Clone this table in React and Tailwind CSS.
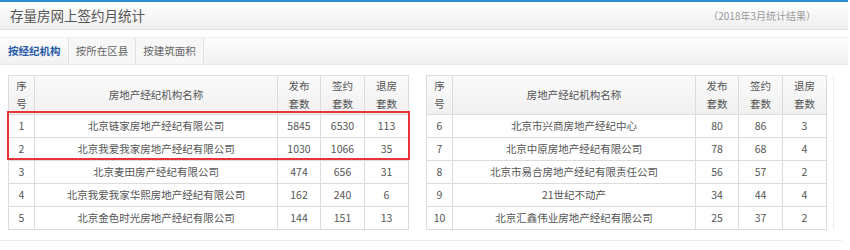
import React from "react";

const left = [
  ["1", "北京链家房地产经纪有限公司", "5845", "6530", "113"],
  ["2", "北京我爱我家房地产经纪有限公司", "1030", "1066", "35"],
  ["3", "北京麦田房产经纪有限公司", "474", "656", "31"],
  ["4", "北京我爱我家华熙房地产经纪有限公司", "162", "240", "6"],
  ["5", "北京金色时光房地产经纪有限公司", "144", "151", "13"],
];

const right = [
  ["6", "北京市兴商房地产经纪中心", "80", "86", "3"],
  ["7", "北京中原房地产经纪有限公司", "78", "68", "4"],
  ["8", "北京市易合房地产经纪有限责任公司", "56", "57", "2"],
  ["9", "21世纪不动产", "34", "44", "4"],
  ["10", "北京汇鑫伟业房地产经纪有限公司", "25", "37", "2"],
];

const cell = "border border-[#dcdcdc] text-center";

const StatTable = ({ rows }) => (
  <table className="w-[400px] border-collapse table-fixed text-[10.5px] text-[#555]">
    <colgroup>
      <col className="w-[26px]" />
      <col className="w-[243px]" />
      <col className="w-[43px]" />
      <col className="w-[44px]" />
      <col className="w-[44px]" />
    </colgroup>
    <thead>
      <tr className="h-[39px] bg-gradient-to-b from-[#fbfbfb] to-[#f0f0f0] leading-[18px] text-[#555]">
        <th className={`${cell} font-normal`}>序<br />号</th>
        <th className={`${cell} font-normal`}>房地产经纪机构名称</th>
        <th className={`${cell} font-normal`}>发布<br />套数</th>
        <th className={`${cell} font-normal`}>签约<br />套数</th>
        <th className={`${cell} font-normal`}>退房<br />套数</th>
      </tr>
    </thead>
    <tbody>
      {rows.map((r) => (
        <tr key={r[0]} className="h-[23px]">
          {r.map((v, i) => (
            <td key={i} className={cell}>{v}</td>
          ))}
        </tr>
      ))}
    </tbody>
  </table>
);

export default function App() {
  return (
    <div
      className="w-[848px] h-[250px] bg-white"
      style={{ fontFamily: '"Noto Sans CJK SC", "Noto Sans", sans-serif' }}
    >
      <div className="h-[2px] bg-[#2a8fd0]" />
      <div className="h-[28px] flex items-center justify-between px-[10px] bg-gradient-to-b from-white to-[#eeeeee] border-b border-[#e2e2e2]">
        <span className="text-[13.5px] text-[#555]">存量房网上签约月统计</span>
        <span className="text-[10px] text-[#999] pr-[22px]">（2018年3月统计结果）</span>
      </div>
      <div className="h-[8px] border-b border-[#eeeeee]" />
      <div className="h-[27px] flex items-end px-[8px] bg-gradient-to-b from-[#fcfcfc] to-[#f1f1f1] border-b border-[#e8e8e8] text-[10.5px]">
        <div className="h-[26px] w-[60px] whitespace-nowrap flex items-center font-bold text-[#2a5ca8]">按经纪机构</div>
        <div className="h-[26px] w-[68px] whitespace-nowrap flex items-center justify-center border-x border-[#e0e0e0] text-[#666] bg-[#f7f7f7]">按所在区县</div>
        <div className="h-[26px] w-[68px] whitespace-nowrap flex items-center justify-center border-r border-[#e0e0e0] text-[#666] bg-[#f7f7f7]">按建筑面积</div>
      </div>
      <div className="flex gap-[17px] pl-[8px] pt-[10px] pb-[10px] border-b border-[#ececec] mr-[6px]">
        <div className="relative">
          <StatTable rows={left} />
          <div className="absolute left-[-1px] top-[36px] w-[403px] h-[49px] border-2 border-[#e8333a]" />
        </div>
        <div className="pr-[6px] border-r border-[#eeeeee]">
          <StatTable rows={right} />
        </div>
      </div>
    </div>
  );
}
